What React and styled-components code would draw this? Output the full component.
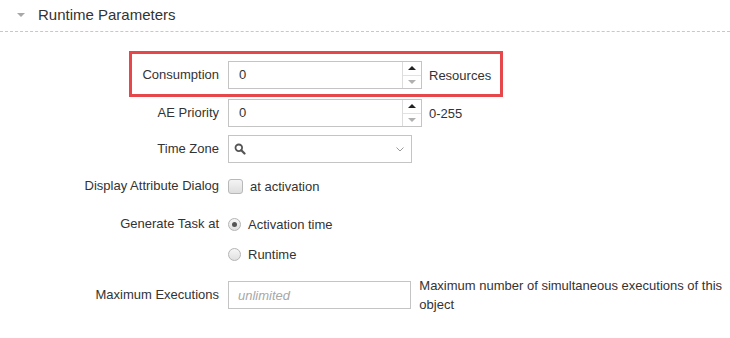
import React from "react"
import styled, { createGlobalStyle } from "styled-components"

const GlobalStyle = createGlobalStyle`
  html, body {
    margin: 0;
    padding: 0;
    background: #fff;
  }
  body {
    font-family: "Liberation Sans", Arial, sans-serif;
    font-size: 13px;
    color: #333;
  }
`

const Page = styled.div`
  width: 730px;
  height: 338px;
  overflow: hidden;
`

const SectionHeader = styled.div`
  display: flex;
  align-items: center;
  height: 31px;
  padding-left: 17px;
  border-bottom: 1px dashed #c8c8c8;
  box-sizing: content-box;
`

const Caret = styled.span`
  width: 0;
  height: 0;
  border-left: 4px solid transparent;
  border-right: 4px solid transparent;
  border-top: 4px solid #a8a8a8;
  margin-right: 13px;
  margin-top: -2px;
`

const HeaderTitle = styled.span`
  font-size: 15px;
  color: #333;
  margin-top: -2px;
`

const Form = styled.div`
  display: flex;
  flex-direction: column;
`

const Row = styled.div`
  position: relative;
  display: flex;
  align-items: ${p => (p.$top ? "flex-start" : "center")};
  min-height: 28px;
  margin-top: ${p => p.$gap}px;

  ${p =>
    p.$highlight &&
    `
    &::after {
      content: "";
      position: absolute;
      left: 129px;
      top: -10px;
      width: 368px;
      height: 40px;
      border: 3px solid #e5474b;
      pointer-events: none;
    }
  `}
`

const Label = styled.label`
  width: 228px;
  flex: none;
  box-sizing: border-box;
  padding-right: 9px;
  text-align: right;
  color: #333;
  line-height: 16px;
  ${p => p.$top && "margin-top: 6px;"}
`

const Control = styled.div`
  display: flex;
  align-items: center;
`

const NumberBox = styled.div`
  display: flex;
  width: 194px;
  height: 28px;
  box-sizing: border-box;
  border: 1px solid #c4c4c4;
  background: #fff;
`

const NumberValue = styled.div`
  flex: 1;
  padding-left: 10px;
  line-height: 26px;
  color: #333;
`

const Spinner = styled.div`
  width: 18px;
  display: flex;
  flex-direction: column;
  border-left: 1px solid #dcdcdc;
`

const SpinHalf = styled.div`
  flex: 1;
  display: flex;
  align-items: center;
  justify-content: center;
  & + & {
    border-top: 1px solid #e2e2e2;
  }
`

const Arrow = styled.span`
  width: 0;
  height: 0;
  border-left: 4px solid transparent;
  border-right: 4px solid transparent;
  ${p =>
    p.$up
      ? `border-bottom: 4px solid #222;`
      : `border-top: 4px solid #b0b0b0;`}
`

const Suffix = styled.span`
  margin-left: 7px;
  color: #333;
`

const TextBox = styled.div`
  display: flex;
  align-items: center;
  width: 184px;
  height: ${p => p.$h || 28}px;
  box-sizing: border-box;
  border: 1px solid #c4c4c4;
  background: #fff;
  padding: 0 7px 0 5px;
`

const Placeholder = styled.span`
  flex: 1;
  padding-left: 4px;
  font-style: italic;
  color: #a8a8a8;
`

const Spacer = styled.span`
  flex: 1;
`

const CheckBox = styled.span`
  width: 15px;
  height: 15px;
  box-sizing: border-box;
  border: 1px solid #b8b8b8;
  border-radius: 3px;
  background: linear-gradient(#f4f4f4, #dedede);
`

const Radio = styled.span`
  display: flex;
  align-items: center;
  justify-content: center;
  width: 13px;
  height: 13px;
  box-sizing: border-box;
  border: 1px solid #b4b4b4;
  border-radius: 50%;
  background: linear-gradient(#f6f6f6, #e0e0e0);
  &::after {
    content: "";
    display: ${p => (p.$checked ? "block" : "none")};
    width: 5px;
    height: 5px;
    border-radius: 50%;
    background: #555;
  }
`

const OptionText = styled.span`
  margin-left: ${p => p.$gap || 7}px;
  color: #333;
`

const Help = styled.div`
  width: 312px;
  margin-left: 8px;
  margin-top: -5px;
  line-height: 19px;
  color: #333;
`

const NumberInput = ({ value }) => (
  <NumberBox>
    <NumberValue>{value}</NumberValue>
    <Spinner>
      <SpinHalf><Arrow $up /></SpinHalf>
      <SpinHalf><Arrow /></SpinHalf>
    </Spinner>
  </NumberBox>
)

const SearchIcon = () => (
  <svg width="12" height="12" viewBox="0 0 12 12">
    <circle cx="4.8" cy="4.8" r="3.3" fill="none" stroke="#555" strokeWidth="1.8" />
    <line x1="7.3" y1="7.3" x2="10.5" y2="10.5" stroke="#555" strokeWidth="2.2" strokeLinecap="round" />
  </svg>
)

const ChevronIcon = () => (
  <svg width="8" height="5" viewBox="0 0 8 5">
    <polyline points="0.5,0.5 4,4 7.5,0.5" fill="none" stroke="#9a9a9a" strokeWidth="1" />
  </svg>
)

export default function App() {
  return (
    <Page>
      <GlobalStyle />
      <SectionHeader>
        <Caret />
        <HeaderTitle>Runtime Parameters</HeaderTitle>
      </SectionHeader>
      <Form>
        <Row $gap={29} $highlight>
          <Label>Consumption</Label>
          <Control>
            <NumberInput value="0" />
            <Suffix>Resources</Suffix>
          </Control>
        </Row>
        <Row $gap={10}>
          <Label>AE Priority</Label>
          <Control>
            <NumberInput value="0" />
            <Suffix>0-255</Suffix>
          </Control>
        </Row>
        <Row $gap={8}>
          <Label>Time Zone</Label>
          <TextBox>
            <SearchIcon />
            <Spacer />
            <ChevronIcon />
          </TextBox>
        </Row>
        <Row $gap={9}>
          <Label>Display Attribute Dialog</Label>
          <Control>
            <CheckBox />
            <OptionText>at activation</OptionText>
          </Control>
        </Row>
        <Row $gap={10}>
          <Label>Generate Task at</Label>
          <Control>
            <Radio $checked />
            <OptionText>Activation time</OptionText>
          </Control>
        </Row>
        <Row $gap={2}>
          <Label />
          <Control>
            <Radio />
            <OptionText>Runtime</OptionText>
          </Control>
        </Row>
        <Row $gap={13} $top>
          <Label $top>Maximum Executions</Label>
          <TextBox $h={28}>
            <Placeholder>unlimited</Placeholder>
          </TextBox>
          <Help>Maximum number of simultaneous executions of this object</Help>
        </Row>
      </Form>
    </Page>
  )
}
